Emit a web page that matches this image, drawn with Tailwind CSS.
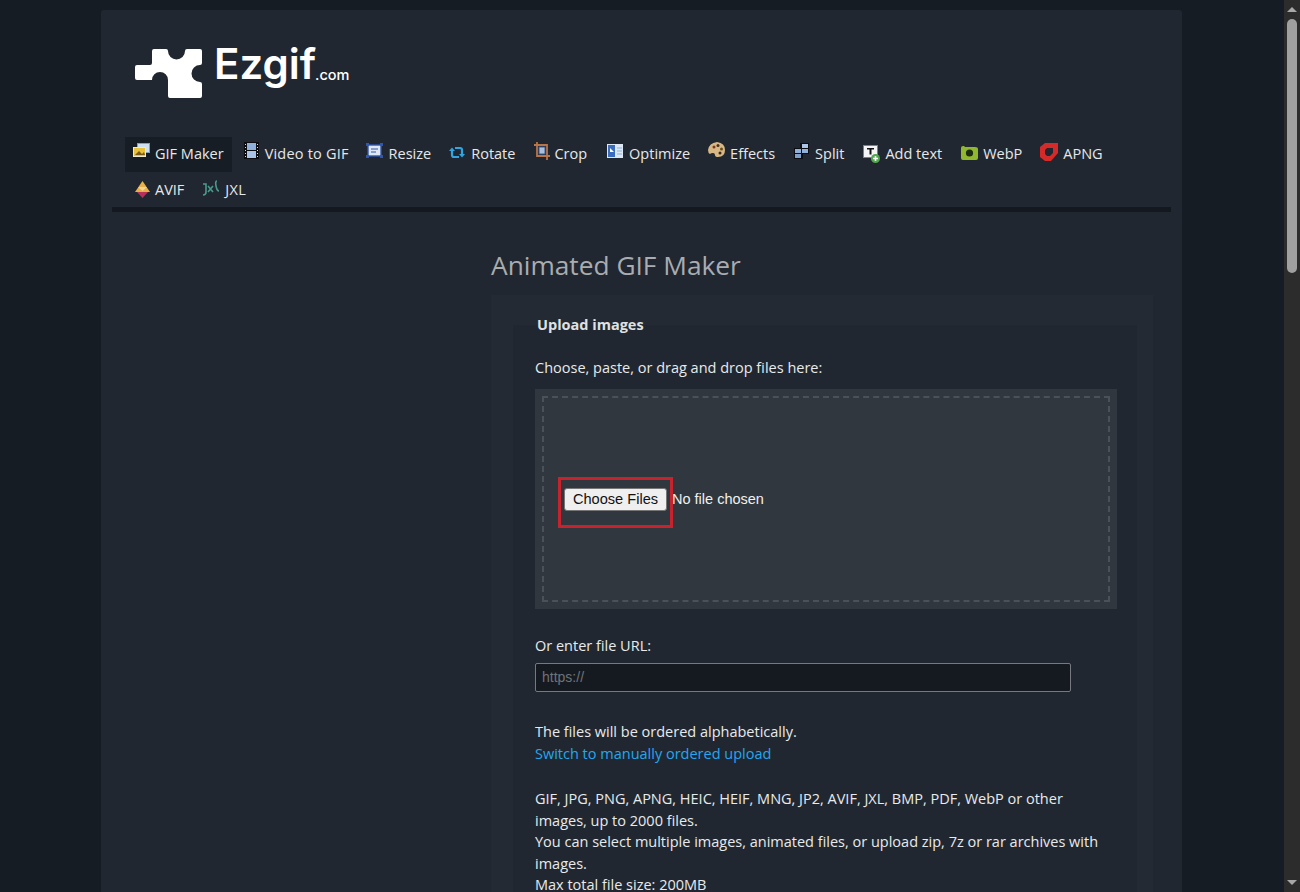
<!DOCTYPE html>
<html lang="en">
<head>
    <meta charset="UTF-8">
    <title>Animated GIF Maker</title>
    <script src="https://cdn.jsdelivr.net/npm/@tailwindcss/browser@4"></script>
</head>
<body class="h-[892px] overflow-hidden flex bg-[#161c24] text-[#e8eaec] font-['Open_Sans','Noto_Sans',sans-serif] text-[14.5px]">
    <div class="flex-1 min-w-0 pl-[101px] pr-[102px] pt-[10px]">
        <div class="h-[882px] bg-[#212730] rounded-t-[3px] px-[11px] overflow-hidden">
            <!-- logo -->
            <div class="h-[127px] pl-[23px] pt-[39px] flex items-start">
                <svg class="w-[67px] h-[50px] shrink-0" viewBox="0 0 67 50" fill="#fff">
                    <path d="M2 16H15Q17 16 17 14V2Q17 0 19 0H31Q33 0 33 2A8.500 8.500 0 0 0 50 2Q50 0 52 0H65Q67 0 67 2V14Q67 16 65 16A8.500 8.500 0 0 0 65 33Q67 33 67 35V47Q67 49 65 49H35Q33 49 33 47V31A8 8 0 0 0 17 31H2Q0 31 0 29V18Q0 16 2 16Z"/>
                </svg>
                <span class="ml-[12px] -mt-[15px] text-[42px] leading-[60px] font-semibold text-white font-['Inter',sans-serif]">Ezgif</span><span class="-ml-[1px] mt-[16px] text-[14.5px] leading-[20px] font-medium text-white font-['Inter',sans-serif]">.com</span>
            </div>
            <!-- nav -->
            <nav class="border-b-[5px] border-[#14191f] h-[75px]">
                <ul class="flex flex-wrap pl-[13px] pr-[60px] text-[#e6e8ea]">
                    <li class="h-[35px] pl-[8px] pr-[8px] pb-[2px] flex items-center gap-[5px] bg-[#171d25]">
                        <svg class="w-[17px] h-[15px] -mt-[7px]" viewBox="0 0 17 15"><rect x="4.500" y="0.500" width="12" height="9" fill="#cfe0f0" stroke="#7fa0c0"/><rect x="0.500" y="4.500" width="12" height="9" fill="#e8c23c" stroke="#f0ead0"/><path d="M2 12l4-4 3 3 2-2 1 3z" fill="#7a5a18"/></svg>
                        <span>GIF Maker</span>
                    </li>
                    <li class="h-[35px] pl-[12px] pr-[7px] pb-[2px] flex items-center gap-[6px]">
                        <svg class="w-[15px] h-[17px] -mt-[7px]" viewBox="0 0 15 17"><rect width="15" height="17" fill="#0b0d10"/><rect x="3" y="1" width="9" height="7" fill="#8fb0d8"/><rect x="3" y="9" width="9" height="7" fill="#a9c4e6"/><path d="M1 2h1v1H1zM1 5h1v1H1zM1 8h1v1H1zM1 11h1v1H1zM1 14h1v1H1zM13 2h1v1h-1zM13 5h1v1h-1zM13 8h1v1h-1zM13 11h1v1h-1zM13 14h1v1h-1z" fill="#d8dde2"/></svg>
                        <span class="tracking-[0.2px]">Video to GIF</span>
                    </li>
                    <li class="h-[35px] pl-[10px] pr-[7px] pb-[2px] flex items-center gap-[6px]">
                        <svg class="w-[17px] h-[15px] -mt-[6px]" viewBox="0 0 17 15"><rect x="2" y="2" width="13" height="11" fill="#dfe7f2" stroke="#2f56b0" stroke-width="1.400"/><path d="M5 6h7M5 9h5" stroke="#2f56b0"/><path d="M0 0h3v3H0zM14 0h3v3h-3zM0 12h3v3H0zM14 12h3v3h-3z" fill="#2f56b0"/></svg>
                        <span>Resize</span>
                    </li>
                    <li class="h-[35px] pl-[11px] pr-[7px] pb-[2px] flex items-center gap-[6px]">
                        <svg class="w-[16px] h-[13px] -mt-[2px]" viewBox="0 0 16 13"><path d="M3 4v5q0 2 2 2h5M13 9V4q0-2-2-2H6" fill="none" stroke="#2fa6e0" stroke-width="2.200"/><path d="M0 5L3 1.500 6 5zM10 8l3 3.500L16 8z" fill="#2fa6e0"/></svg>
                        <span>Rotate</span>
                    </li>
                    <li class="h-[35px] pl-[12px] pr-[7px] pb-[2px] flex items-center gap-[4px]">
                        <svg class="w-[16px] h-[18px] -mt-[6px]" viewBox="0 0 16 18" fill="none"><path d="M3 0v14h13M0 3h13v15" stroke="#b8754a" stroke-width="1.800"/><rect x="5" y="5" width="6" height="7" fill="#a9c0dc" stroke="#3a5a90"/></svg>
                        <span>Crop</span>
                    </li>
                    <li class="h-[35px] pl-[13px] pr-[7px] pb-[2px] flex items-center gap-[6px]">
                        <svg class="w-[16px] h-[14px] -mt-[6px]" viewBox="0 0 16 14"><rect width="16" height="14" fill="#dce8f6"/><rect x="1" y="1" width="7" height="12" fill="#3a6cc0"/><path d="M3 4l4 4H3z" fill="#fff"/><path d="M10 4h5M10 7h5M10 10h5" stroke="#8fb0d8"/></svg>
                        <span>Optimize</span>
                    </li>
                    <li class="h-[35px] pl-[11px] pr-[7px] pb-[2px] flex items-center gap-[5px]">
                        <svg class="w-[17px] h-[16px] -mt-[7px]" viewBox="0 0 17 16"><path d="M9 0q8 1 8 8t-7 7q-3 0-3-2t-2-2-3 1q-2-1-2-4 1-7 9-8z" fill="#d8b784"/><circle cx="6" cy="5" r="1.500" fill="#7a3a20"/><circle cx="10" cy="3.500" r="1.500" fill="#4a3020"/><circle cx="13.500" cy="7" r="1.500" fill="#6a5020"/><circle cx="12" cy="11" r="1.500" fill="#3a2a18"/></svg>
                        <span>Effects</span>
                    </li>
                    <li class="h-[35px] pl-[12px] pr-[7px] pb-[2px] flex items-center gap-[6px]">
                        <svg class="w-[15px] h-[16px] -mt-[5px]" viewBox="0 0 15 16"><rect y="5" width="9" height="11" fill="#0b0d10"/><rect x="6" width="9" height="11" fill="#0b0d10"/><rect x="1" y="6" width="6" height="4" fill="#8fb0d8"/><rect x="1" y="11" width="6" height="4" fill="#7f9fc8"/><rect x="8" y="1" width="6" height="4" fill="#a9c4e6"/><rect x="8" y="6" width="6" height="4" fill="#8fb0d8"/></svg>
                        <span>Split</span>
                    </li>
                    <li class="h-[35px] pl-[12px] pr-[7px] pb-[2px] flex items-center gap-[5px]">
                        <svg class="w-[17px] h-[18px]" viewBox="0 0 17 18"><rect x="0.500" y="0.500" width="14" height="12" fill="#f4f5f6" stroke="#7a8088"/><path d="M4 3h7v1.600H8.500v5h-2v-5H4z" fill="#111"/><circle cx="12.500" cy="13.500" r="4.500" fill="#4fa84a"/><path d="M12.500 11v5M10 13.500h5" stroke="#fff" stroke-width="1.600"/></svg>
                        <span>Add text</span>
                    </li>
                    <li class="h-[35px] pl-[12px] pr-[7px] pb-[2px] flex items-center gap-[5px]">
                        <svg class="w-[17px] h-[15px] -mt-[2px]" viewBox="0 0 17 15"><path d="M2 1h1l1 1h10q3 0 3 2v9q0 2-2 2H2q-2 0-2-2V3q0-2 2-2z" fill="#8fb82f"/><circle cx="8.500" cy="8" r="3.600" fill="#1d2a14"/></svg>
                        <span>WebP</span>
                    </li>
                    <li class="h-[35px] pl-[11px] pr-[7px] pb-[2px] flex items-center gap-[5px]">
                        <svg class="w-[18px] h-[18px] -mt-[3px]" viewBox="0 0 18 18"><path d="M5 0h13v10l-7 8H5l-5-4V4z" fill="#d42a2a"/><path d="M13 5v5l-3 3H7l-2-2V7l2-2z" fill="#212730"/></svg>
                        <span>APNG</span>
                    </li>
                    <li class="h-[35px] pl-[10px] pr-[7px] flex items-center gap-[5px]">
                        <svg class="w-[15px] h-[17px] -mt-[1px]" viewBox="0 0 15 17"><path d="M7.500 0l7.500 11H0z" fill="#e8b04a"/><path d="M3 6h9l-4.500 4z" fill="#f4d48a"/><path d="M2 11h11l-5.500 6z" fill="#b8305a"/></svg>
                        <span>AVIF</span>
                    </li>
                    <li class="h-[35px] pl-[11px] pr-[7px] flex items-center gap-[5px]">
                        <svg class="w-[18px] h-[16px] -mt-[4px]" viewBox="0 0 18 16" fill="none" stroke="#4a9a8c" stroke-width="1.600"><path d="M1 4h3v8q0 3-3 3"/><path d="M6 6l5 6M11 6l-5 6"/><path d="M15 1q-2 0-1 5t3 5"/></svg>
                        <span class="tracking-[0.3px]">JXL</span>
                    </li>
                </ul>
            </nav>
            <!-- content -->
            <main class="ml-[379px] mr-[18px]">
                <h1 class="mt-[34px] h-[49px] text-[26.3px] leading-[38px] text-[#a9acb0] font-normal">Animated GIF Maker</h1>
                <section class="bg-[#242a33] pl-[22px] pr-[16px] pt-[30px]">
                    <div class="flow-root bg-[#212730] pl-[22px] pr-[20px] h-[700px]">
                        <h2 class="-mt-[10px] ml-[2px] text-[14.5px] leading-[20px] font-bold text-[#dfe1e3]">Upload images</h2>
                        <p class="mt-[22px] leading-[22px]">Choose, paste, or drag and drop files here:</p>
                        <div class="mt-[10px] h-[220px] bg-[#31373e] p-[7px]">
                            <div class="h-[206px] border-2 border-dashed border-[#4b5158] pl-[20px] flex items-center">
                                <div class="relative flex items-center font-['Liberation_Sans',sans-serif] text-[14.5px]">
                                    <button class="w-[103px] h-[23px] bg-[#efefef] border border-[#767676] rounded-[3px] text-[#111] text-[14.6px]">Choose Files</button>
                                    <span class="ml-[5px] pt-[1px] text-[#f0f0f0]">No file chosen</span>
                                    <div class="absolute -left-[6px] -top-[11px] w-[115px] h-[51px] border-[3px] border-[#c5232e]"></div>
                                </div>
                            </div>
                        </div>
                        <p class="mt-[26px] leading-[22px]">Or enter file URL:</p>
                        <div class="mt-[6px] w-[536px] h-[29px] bg-[#151a21] border border-[#767a80] rounded-[2px] pl-[6px] flex items-center text-[#6f7377] text-[14px] font-['Liberation_Sans',sans-serif]">https://</div>
                        <p class="mt-[29px] leading-[22px]">The files will be ordered alphabetically.</p>
                        <a class="block leading-[22px] text-[#22a7f0]">Switch to manually ordered upload</a>
                        <p class="mt-[23px] leading-[21.6px] w-[575px]">GIF, JPG, PNG, APNG, HEIC, HEIF, MNG, JP2, AVIF, JXL, BMP, PDF, WebP or other images, up to 2000 files.<br>You can select multiple images, animated files, or upload zip, 7z or rar archives with images.<br>Max total file size: 200MB</p>
                    </div>
                </section>
            </main>
        </div>
    </div>
    <!-- scrollbar -->
    <div class="w-[16px] h-full bg-[#2c2c2c] flex flex-col items-center">
        <svg class="w-[10px] h-[5px] mt-[7px]" viewBox="0 0 10 5" fill="#a8a8a8"><path d="M5 0l5 5H0z"/></svg>
        <div class="w-[10px] h-[254px] mt-[7px] rounded-[5px] bg-[#a0a0a0]"></div>
        <svg class="w-[10px] h-[5px] mt-auto mb-[7px]" viewBox="0 0 10 5" fill="#a8a8a8"><path d="M5 5l5-5H0z"/></svg>
    </div>
</body>
</html>
